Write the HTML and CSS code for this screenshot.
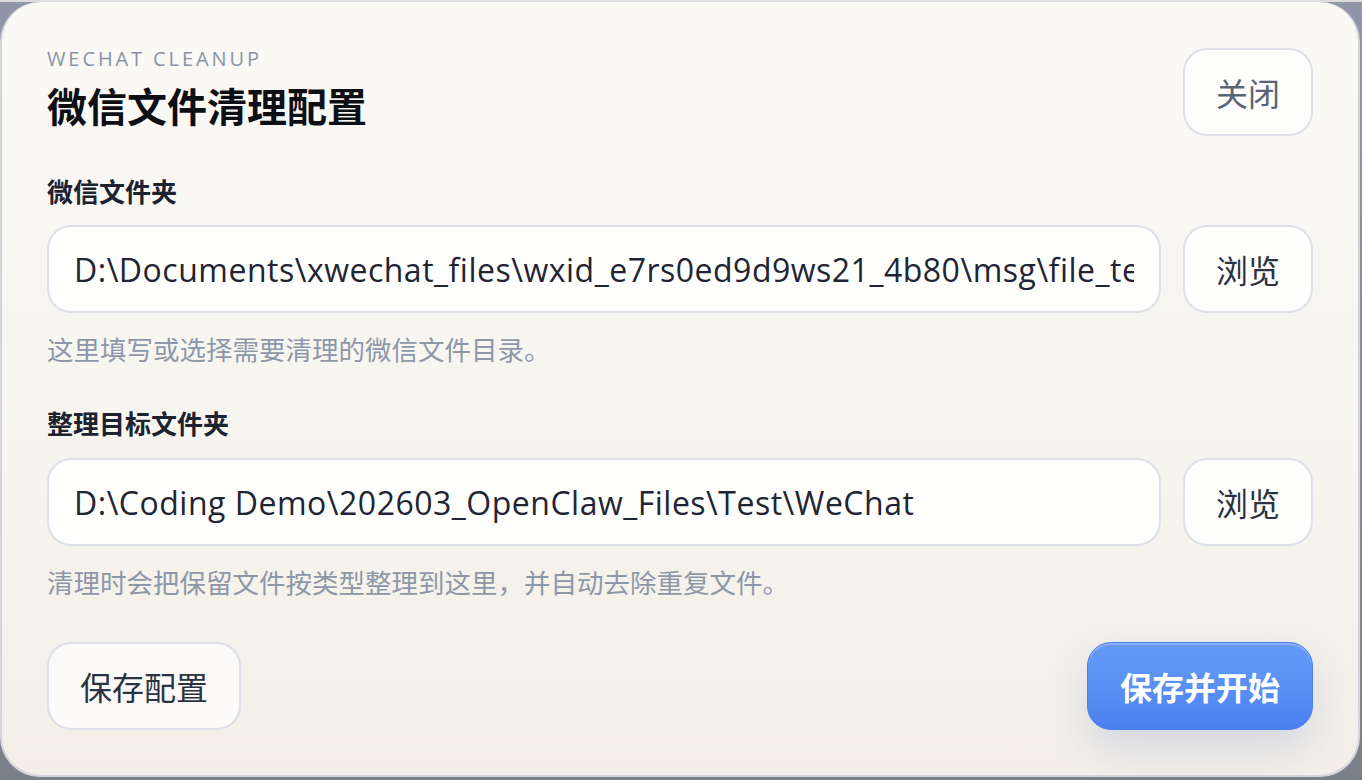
FILE: index.html
```html
<!DOCTYPE html>
<html lang="zh-CN">
<head>
<meta charset="utf-8">
<title>微信文件清理配置</title>
<link rel="stylesheet" href="styles.css">
</head>
<body>
<div class="backdrop">
  <main class="card">
    <header class="header">
      <div class="heading">
        <div class="eyebrow">WECHAT CLEANUP</div>
        <h1 class="title">微信文件清理配置</h1>
      </div>
      <button class="btn btn-ghost btn-close" type="button">关闭</button>
    </header>

    <section class="field">
      <label class="label">微信文件夹</label>
      <div class="row">
        <input class="input" type="text" value="D:\Documents\xwechat_files\wxid_e7rs0ed9d9ws21_4b80\msg\file_temp">
        <button class="btn btn-ghost" type="button">浏览</button>
      </div>
      <p class="hint">这里填写或选择需要清理的微信文件目录。</p>
    </section>

    <section class="field field-second">
      <label class="label">整理目标文件夹</label>
      <div class="row">
        <input class="input" type="text" value="D:\Coding Demo\202603_OpenClaw_Files\Test\WeChat">
        <button class="btn btn-ghost" type="button">浏览</button>
      </div>
      <p class="hint">清理时会把保留文件按类型整理到这里，并自动去除重复文件。</p>
    </section>

    <footer class="footer">
      <button class="btn btn-ghost btn-save" type="button">保存配置</button>
      <button class="btn btn-primary" type="button">保存并开始</button>
    </footer>
  </main>
</div>
</body>
</html>
```

FILE: styles.css
```css
* { box-sizing: border-box; }

html, body {
  margin: 0;
  padding: 0;
  width: 1362px;
  height: 780px;
  overflow: hidden;
}

body {
  font-family: "Open Sans", "Noto Sans CJK SC", sans-serif;
  color: #1f2533;
}

.backdrop {
  height: 780px;
  border-top: 2px solid #dcdcdf;
  background: linear-gradient(180deg, #8f96a8 0%, #858b99 60%, #7b7f89 100%);
}

.card {
  width: 1360px;
  height: 775px;
  border: 2px solid #d4d5da;
  border-top: none;
  border-radius: 40px;
  background: linear-gradient(180deg, #faf9f6 0%, #f7f5f0 50%, #f3efe8 100%);
  padding: 43px 45px 0 45px;
  display: flex;
  flex-direction: column;
}

.header {
  display: flex;
  justify-content: space-between;
  align-items: flex-start;
}

.eyebrow {
  font-family: "Open Sans", "Noto Sans CJK SC", sans-serif;
  font-size: 20px;
  line-height: 24px;
  letter-spacing: 2.9px;
  color: #8a93a6;
  margin-top: 2px;
}

.title {
  margin: 8px 0 0 0;
  font-family: "Noto Sans CJK SC", sans-serif;
  font-size: 40px;
  line-height: 52px;
  font-weight: 700;
  color: #0d0f14;
}

.btn {
  height: 88px;
  border: 2px solid #dde0e9;
  border-radius: 24px;
  background: #fdfdfc;
  font-family: "Noto Sans CJK SC", sans-serif;
  font-size: 32px;
  color: #2b3240;
  cursor: pointer;
  padding: 0 30px;
  flex: none;
}

.btn-close {
  width: 130px;
  color: #5b6377;
  margin-top: 3px;
}

.field {
  margin-top: 37px;
}

.field-second {
  margin-top: 38px;
}

.label {
  display: block;
  font-family: "Noto Sans CJK SC", sans-serif;
  font-size: 26px;
  line-height: 36px;
  font-weight: 700;
  color: #1c2230;
}

.row {
  display: flex;
  gap: 22px;
  margin-top: 16px;
}

.field-second .row {
  margin-top: 17px;
}

.row .btn {
  width: 130px;
}

.input {
  flex: 1;
  min-width: 0;
  height: 88px;
  border: 2px solid #dde0e9;
  border-radius: 24px;
  background: #fefefd;
  padding: 0 25px;
  font-family: "Open Sans", "Noto Sans CJK SC", sans-serif;
  font-size: 32px;
  letter-spacing: 0.5px;
  color: #1f2533;
  outline: none;
}

.hint {
  margin: 18px 0 0 0;
  font-family: "Noto Sans CJK SC", sans-serif;
  font-size: 26.5px;
  line-height: 36px;
  color: #8e97a8;
}

.footer {
  margin-top: 42px;
  display: flex;
  justify-content: space-between;
}

.btn-save {
  width: 194px;
  background: #fbfaf8;
}

.btn-primary {
  width: 226px;
  border: 1px solid #4a7fea;
  background: linear-gradient(180deg, #6299f7 0%, #5a90f4 50%, #4a7fef 100%);
  color: #ffffff;
  font-weight: 700;
  box-shadow: inset 0 2px 0 rgba(255, 255, 255, 0.25), 0 18px 40px rgba(70, 100, 190, 0.18);
}
```
